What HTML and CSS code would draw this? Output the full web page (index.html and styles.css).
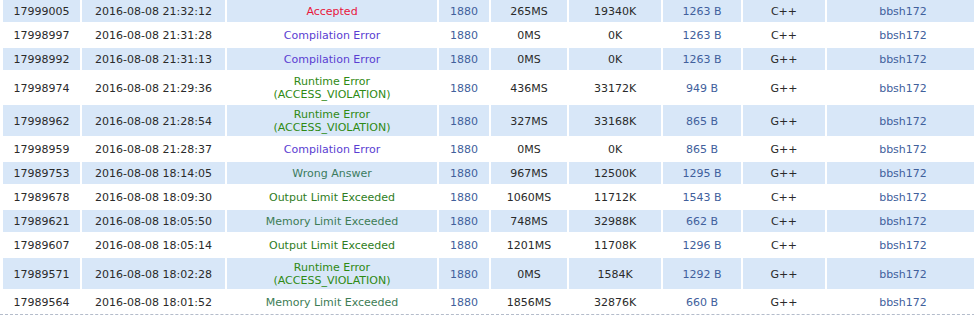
FILE: index.html
```html
<!DOCTYPE html>
<html>
<head>
<meta charset="utf-8">
<link rel="stylesheet" href="styles.css">
</head>
<body>
<div class="wrap">
<table class="status">
<colgroup>
<col class="c-id"><col class="c-time"><col class="c-res"><col class="c-pro"><col class="c-run"><col class="c-mem"><col class="c-len"><col class="c-lang"><col class="c-user">
</colgroup>
<tbody>
<tr class="alt"><td>17999005</td><td>2016-08-08 21:32:12</td><td class="ac">Accepted</td><td><a>1880</a></td><td>265MS</td><td>19340K</td><td><a>1263 B</a></td><td>C++</td><td><a>bbsh172</a></td></tr>
<tr><td>17998997</td><td>2016-08-08 21:31:28</td><td class="ce">Compilation Error</td><td><a>1880</a></td><td>0MS</td><td>0K</td><td><a>1263 B</a></td><td>C++</td><td><a>bbsh172</a></td></tr>
<tr class="alt"><td>17998992</td><td>2016-08-08 21:31:13</td><td class="ce">Compilation Error</td><td><a>1880</a></td><td>0MS</td><td>0K</td><td><a>1263 B</a></td><td>G++</td><td><a>bbsh172</a></td></tr>
<tr><td>17998974</td><td>2016-08-08 21:29:36</td><td class="re">Runtime Error<br>(ACCESS_VIOLATION)</td><td><a>1880</a></td><td>436MS</td><td>33172K</td><td><a>949 B</a></td><td>G++</td><td><a>bbsh172</a></td></tr>
<tr class="alt"><td>17998962</td><td>2016-08-08 21:28:54</td><td class="re">Runtime Error<br>(ACCESS_VIOLATION)</td><td><a>1880</a></td><td>327MS</td><td>33168K</td><td><a>865 B</a></td><td>G++</td><td><a>bbsh172</a></td></tr>
<tr><td>17998959</td><td>2016-08-08 21:28:37</td><td class="ce">Compilation Error</td><td><a>1880</a></td><td>0MS</td><td>0K</td><td><a>865 B</a></td><td>G++</td><td><a>bbsh172</a></td></tr>
<tr class="alt"><td>17989753</td><td>2016-08-08 18:14:05</td><td class="wa">Wrong Answer</td><td><a>1880</a></td><td>967MS</td><td>12500K</td><td><a>1295 B</a></td><td>G++</td><td><a>bbsh172</a></td></tr>
<tr><td>17989678</td><td>2016-08-08 18:09:30</td><td class="ole">Output Limit Exceeded</td><td><a>1880</a></td><td>1060MS</td><td>11712K</td><td><a>1543 B</a></td><td>C++</td><td><a>bbsh172</a></td></tr>
<tr class="alt"><td>17989621</td><td>2016-08-08 18:05:50</td><td class="mle">Memory Limit Exceeded</td><td><a>1880</a></td><td>748MS</td><td>32988K</td><td><a>662 B</a></td><td>C++</td><td><a>bbsh172</a></td></tr>
<tr><td>17989607</td><td>2016-08-08 18:05:14</td><td class="ole">Output Limit Exceeded</td><td><a>1880</a></td><td>1201MS</td><td>11708K</td><td><a>1296 B</a></td><td>C++</td><td><a>bbsh172</a></td></tr>
<tr class="alt"><td>17989571</td><td>2016-08-08 18:02:28</td><td class="re">Runtime Error<br>(ACCESS_VIOLATION)</td><td><a>1880</a></td><td>0MS</td><td>1584K</td><td><a>1292 B</a></td><td>G++</td><td><a>bbsh172</a></td></tr>
<tr><td>17989564</td><td>2016-08-08 18:01:52</td><td class="mle">Memory Limit Exceeded</td><td><a>1880</a></td><td>1856MS</td><td>32876K</td><td><a>660 B</a></td><td>G++</td><td><a>bbsh172</a></td></tr>
</tbody>
</table>
</div>
</body>
</html>
```
FILE: styles.css
```css
html, body {
  margin: 0;
  padding: 0;
  background: #fff;
  overflow: hidden;
}
.wrap {
  width: 990px;
  border-bottom: 1px dashed #b4bccb;
}
.status {
  table-layout: fixed;
  width: 980px;
  margin: -2px 0 -1px 1px;
  border-collapse: separate;
  border-spacing: 2px;
  font-family: "DejaVu Sans", Verdana, sans-serif;
  font-size: 11px;
  color: #2a2a2a;
}
.c-id { width: 77px; }
.c-time { width: 143px; }
.c-res { width: 210px; }
.c-pro { width: 50px; }
.c-run { width: 76px; }
.c-mem { width: 92px; }
.c-len { width: 78px; }
.c-lang { width: 82px; }
.c-user { width: 152px; }
.status tr { height: 22px; }
.status td {
  padding: 3px 0 2px;
  line-height: 13px;
  text-align: center;
  white-space: nowrap;
}
.status tr.alt td { background: #d8e7f8; }
.status a { color: #41609c; text-decoration: none; }
.ac { color: #e8163c; }
.ce { color: #5a3ed2; }
.re { color: #2f8a14; }
.wa { color: #3b7b5e; }
.ole { color: #2f7d23; }
.mle { color: #3d7c55; }
```
